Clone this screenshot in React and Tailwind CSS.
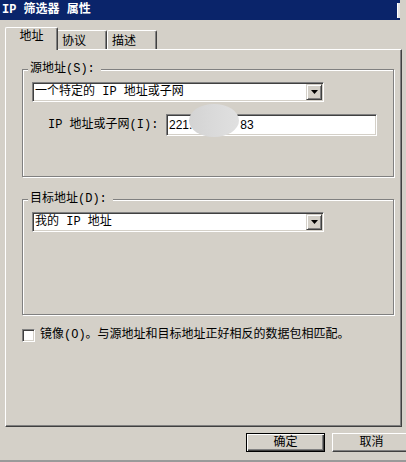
function Arrow() {
  return (
    <svg width="7" height="4" viewBox="0 0 7 4">
      <path d="M0 0H7L3.5 4Z" fill="#000" />
    </svg>
  );
}

function Combo({ text }) {
  return (
    <div className="w-[292px] h-[20px] bg-white flex items-center border border-t-[#808080] border-l-[#808080] border-r-white border-b-white shadow-[inset_1px_1px_0_#404040,inset_-1px_-1px_0_#d4d0c8] p-[1px]">
      <span className="pl-[1px] whitespace-pre">{text}</span>
      <div className="ml-auto w-[16px] h-full bg-[#d4d0c8] flex items-center justify-center border border-t-[#d4d0c8] border-l-[#d4d0c8] border-r-[#404040] border-b-[#404040] shadow-[inset_1px_1px_0_#fff,inset_-1px_-1px_0_#808080]">
        <Arrow />
      </div>
    </div>
  );
}

function Group({ legend, height, className = "", children }) {
  return (
    <div
      className={`relative w-[372px] border border-[#808080] shadow-[inset_1px_1px_0_#fff,1px_1px_0_#fff] pl-[9px] pt-[12px] ${className}`}
      style={{ height }}
    >
      <span className="absolute left-[5px] -top-[8px] pl-[2px] pr-[6px] bg-[#d4d0c8] leading-[14px] whitespace-pre">
        {legend}
      </span>
      {children}
    </div>
  );
}

export default function App() {
  return (
    <div className="w-[406px] h-[462px] bg-[#d4d0c8] overflow-hidden flex flex-col text-[12px] leading-[14px] text-black font-['Liberation_Mono','Noto_Sans_CJK_SC',monospace] border-b-2 border-b-[#9a9a9a]">
      {/* Title bar */}
      <div className="h-[20px] shrink-0 flex">
        <div className="w-[400px] bg-[#0a246a] flex items-center justify-between pl-[2px]">
          <span className="text-white font-bold whitespace-pre">IP 筛选器 属性</span>
          <div className="w-[3px] h-[15px] bg-[#e4e4e4] border-l border-white" />
        </div>
      </div>

      {/* Tabs */}
      <div className="mt-[7px] h-[22px] shrink-0 flex items-end pl-[5px]">
        <div className="relative z-10 w-[53px] h-[23px] -mb-[1px] bg-[#d4d0c8] border-t border-l border-r border-t-white border-l-white border-r-[#404040] rounded-t-[2px] shadow-[inset_-1px_0_0_#808080] flex justify-center pt-[2px]">
          地址
        </div>
        <div className="w-[49px] h-[19px] border-t border-r border-t-white border-r-[#404040] rounded-tr-[2px] shadow-[inset_-1px_0_0_#808080] pl-[4px] pt-[4px]">
          协议
        </div>
        <div className="w-[50px] h-[19px] border-t border-l border-r border-t-white border-l-white border-r-[#404040] rounded-t-[2px] shadow-[inset_-1px_0_0_#808080] pl-[4px] pt-[4px]">
          描述
        </div>
      </div>

      {/* Panel */}
      <div className="ml-[5px] w-[397px] h-[378px] shrink-0 border border-t-white border-l-white border-r-[#404040] border-b-[#404040] shadow-[inset_-1px_-1px_0_#808080] pt-[19px] pl-[16px]">
        <Group legend="源地址(S):" height={108}>
          <Combo text="一个特定的 IP 地址或子网" />
          <div className="mt-[12px] flex items-center">
            <span className="pl-[16px] w-[134px] whitespace-pre">IP 地址或子网(I):</span>
            <div className="relative w-[211px] h-[22px] bg-white flex items-center border border-t-[#808080] border-l-[#808080] border-r-white border-b-white shadow-[inset_1px_1px_0_#404040,inset_-1px_-1px_0_#d4d0c8] p-[1px] font-['Liberation_Sans',sans-serif]">
              <span className="pl-[1px]">221.</span>
              <span className="inline-block w-[48px]" />
              <span>83</span>
              <div className="absolute left-[22px] -top-[11px] w-[50px] h-[33px] rounded-[50%] bg-[linear-gradient(90deg,#d3d3d3,#dadada_50%,#e0e0e0)]" />
            </div>
          </div>
        </Group>

        <Group legend="目标地址(D):" height={116} className="mt-[22px]">
          <Combo text="我的 IP 地址" />
        </Group>

        <div className="mt-[13px] flex items-center">
          <div className="w-[13px] h-[13px] bg-white border border-t-[#808080] border-l-[#808080] border-r-white border-b-white shadow-[inset_1px_1px_0_#404040,inset_-1px_-1px_0_#d4d0c8]" />
          <span className="ml-[5px] whitespace-pre">镜像(O)。与源地址和目标地址正好相反的数据包相匹配。</span>
        </div>
      </div>

      {/* Buttons */}
      <div className="mt-[6px] flex pl-[246px] gap-[7px] shrink-0">
        <div className="w-[79px] h-[19px] shrink-0 border border-black shadow-[inset_1px_1px_0_#fff,inset_-1px_-1px_0_#404040,inset_-2px_-2px_0_#808080] flex items-center justify-center">
          确定
        </div>
        <div className="w-[79px] h-[19px] shrink-0 border border-t-white border-l-white border-r-[#404040] border-b-[#404040] shadow-[inset_-1px_-1px_0_#808080] flex items-center justify-center">
          取消
        </div>
      </div>
    </div>
  );
}
